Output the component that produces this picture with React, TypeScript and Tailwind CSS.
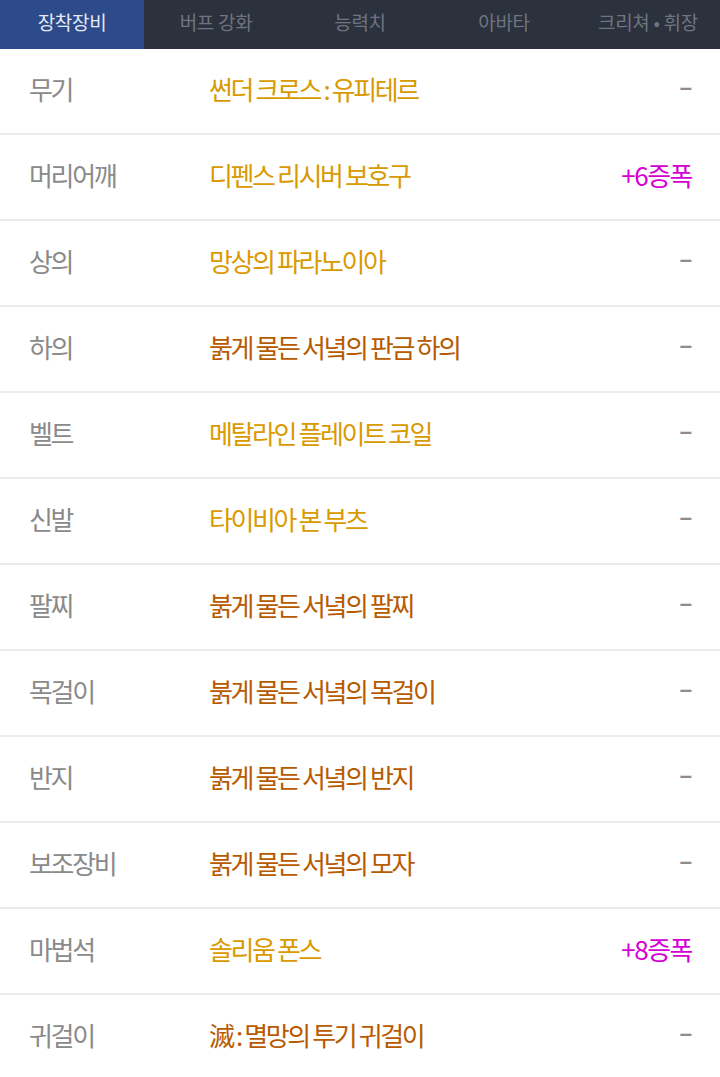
import React from "react";

type Row = { label: string; name: string; color: "gold" | "brown"; extra?: string };

const rows: Row[] = [
  { label: "무기", name: "썬더 크로스 : 유피테르", color: "gold" },
  { label: "머리어깨", name: "디펜스 리시버 보호구", color: "gold", extra: "+6증폭" },
  { label: "상의", name: "망상의 파라노이아", color: "gold" },
  { label: "하의", name: "붉게 물든 서녘의 판금 하의", color: "brown" },
  { label: "벨트", name: "메탈라인 플레이트 코일", color: "gold" },
  { label: "신발", name: "타이비아 본 부츠", color: "gold" },
  { label: "팔찌", name: "붉게 물든 서녘의 팔찌", color: "brown" },
  { label: "목걸이", name: "붉게 물든 서녘의 목걸이", color: "brown" },
  { label: "반지", name: "붉게 물든 서녘의 반지", color: "brown" },
  { label: "보조장비", name: "붉게 물든 서녘의 모자", color: "brown" },
  { label: "마법석", name: "솔리움 폰스", color: "gold", extra: "+8증폭" },
  { label: "귀걸이", name: "滅 : 멸망의 투기 귀걸이", color: "brown" },
];

const tabs = ["장착장비", "버프 강화", "능력치", "아바타", "크리쳐 • 휘장"];

export default function App() {
  return (
    <div
      className="w-[720px] h-[1077px] overflow-hidden bg-white"
      style={{ fontFamily: '"Noto Sans CJK KR", "Noto Sans", sans-serif' }}
    >
      <div className="flex h-[49px] bg-[#2b313d]">
        {tabs.map((t, i) => (
          <div
            key={t}
            className={
              i === 0
                ? "w-[144px] flex items-center justify-center bg-[#2d4a8b] text-[#e6eaf3] text-[19px] tracking-[-0.3px] pb-[5px]"
                : "w-[144px] flex items-center justify-center text-[#6f7580] text-[19px] tracking-[-0.3px] pb-[5px]"
            }
          >
            {t}
          </div>
        ))}
      </div>
      <div className="flex flex-col">
        {rows.map((r) => (
          <div
            key={r.label}
            className="flex items-center h-[86px] border-b-2 border-[#ebebeb] pl-[29px] pr-[28px]"
          >
            <div className="w-[180px] text-[26px] text-[#8a8a8a] tracking-[-2.3px] leading-none pb-[5px]">
              {r.label}
            </div>
            <div
              className={
                r.color === "gold"
                  ? "flex-1 text-[26px] text-[#d99a00] tracking-[-2.4px] leading-none pb-[5px]"
                  : "flex-1 text-[26px] text-[#b85a00] tracking-[-2.4px] leading-none pb-[5px]"
              }
            >
              {r.name}
            </div>
            {r.extra ? (
              <div className="text-[26px] text-[#d400d4] tracking-[-1.5px] leading-none pb-[5px]">{r.extra}</div>
            ) : (
              <div
                className="text-[22px] font-bold text-[#8c8c8c] leading-none pb-[7px]"
                style={{ fontFamily: '"Liberation Sans", sans-serif' }}
              >
                –
              </div>
            )}
          </div>
        ))}
      </div>
    </div>
  );
}
